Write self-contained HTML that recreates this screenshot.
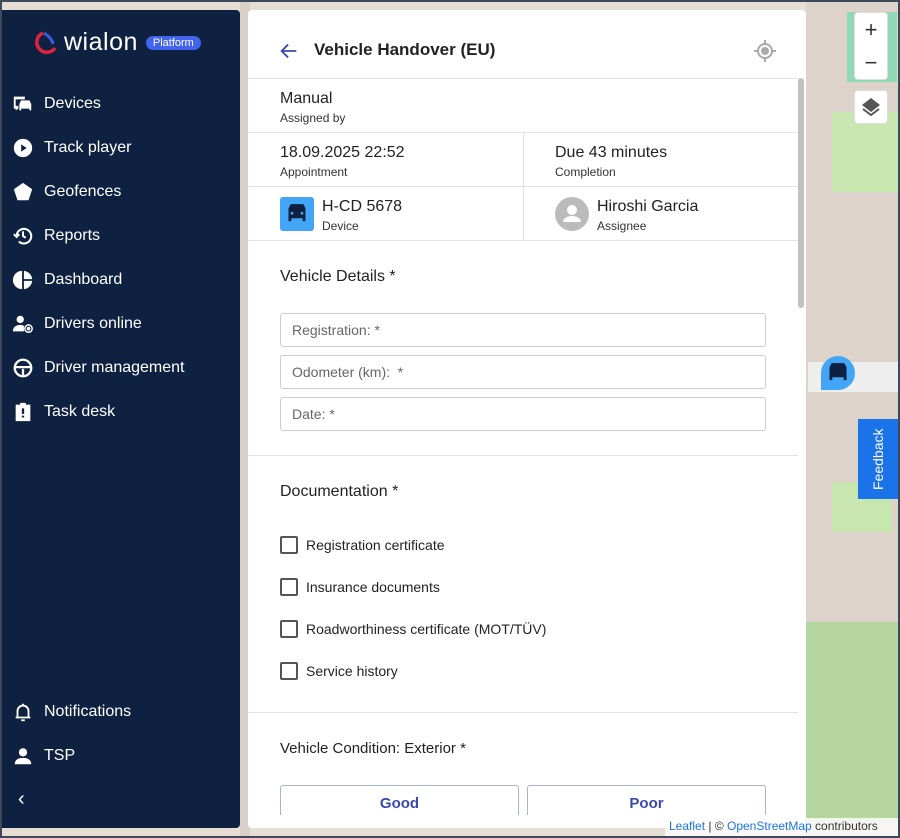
<!DOCTYPE html>
<html><head><meta charset="utf-8"><style>
*{box-sizing:border-box;margin:0;padding:0}
body{width:900px;height:838px;background:#3d4a5c;font-family:"Liberation Sans",sans-serif;overflow:hidden;position:relative}
.map{position:absolute;left:2px;top:2px;width:896px;height:834px;background:#e6ddd4;overflow:hidden}
.side{position:absolute;left:2px;top:10px;width:238px;height:818px;background:#0f2141;border-radius:0 4px 4px 0;color:#fff}
.nav{position:absolute;left:10px;font-size:16px;display:flex;align-items:center}
.nav svg{width:22px;height:22px;margin-right:10px}
.panel{position:absolute;left:248px;top:10px;width:558px;height:818px;background:#fff;border-radius:4px;overflow:hidden;color:#222}
.hr{position:absolute;left:0;width:550px;height:1px;background:#e2e2e2}
.t{position:absolute;font-size:16px;color:#222}
.s{position:absolute;font-size:12px;color:#333}
.inp{position:absolute;left:32px;width:486px;height:34px;border:1px solid #ccc;border-radius:3px;font-size:14px;color:#666;padding:8px 11px}
.cb{position:absolute;left:32px;width:18px;height:18px;border:2px solid #555;border-radius:2px}
.cl{position:absolute;left:58px;font-size:14px;color:#222}
.btn{position:absolute;top:775px;width:239px;height:40px;border:1px solid #a8b0dd;border-radius:3px;color:#3949ab;font-weight:bold;font-size:15px;text-align:center;padding-top:9px}
</style></head><body>
<div class="map">
<div style="position:absolute;left:238px;top:0;width:10px;height:834px;background:#d9d0c8"></div>
<div style="position:absolute;left:804px;top:0;width:94px;height:834px;background:#ddd3ca"></div>
<div style="position:absolute;left:845px;top:10px;width:50px;height:70px;background:#8fd9b4"></div>
<div style="position:absolute;left:830px;top:110px;width:66px;height:80px;background:#c8e6b0"></div>
<div style="position:absolute;left:804px;top:620px;width:94px;height:200px;background:#b5d69e"></div>
<div style="position:absolute;left:830px;top:480px;width:60px;height:50px;background:#c8e6b0"></div>
<div style="position:absolute;left:806px;top:360px;width:92px;height:30px;background:#eee"></div>
</div>
<div class="side">
<div style="position:absolute;left:30px;top:18px;display:flex;align-items:center">
<svg width="26" height="26" viewBox="0 0 26 26"><path d="M11 3 A10 10 0 1 0 23 18" stroke="#e0223c" stroke-width="3.5" fill="none"/><path d="M12 3 Q20 8 21 14" stroke="#3b5bdb" stroke-width="3" fill="none"/></svg>
<span style="font-size:25px;margin-left:6px;letter-spacing:0.5px">wialon</span>
<span style="margin-left:8px;background:#4263eb;border-radius:8px;font-size:11px;padding:1px 7px">Platform</span></div>
<div class="nav" style="top:83px"><svg viewBox="0 0 24 24" fill="#fff"><path d="M2 4h12v3H4v7h3v3l-3 2v-2H2z M8 12l2-4h9l2 4v7h-2v-2H10v2H8z"/></svg>Devices</div>
<div class="nav" style="top:127px"><svg viewBox="0 0 24 24"><circle cx="12" cy="12" r="10" fill="#fff"/><path d="M10 8l6 4-6 4z" fill="#0f2141"/></svg>Track player</div>
<div class="nav" style="top:171px"><svg viewBox="0 0 24 24"><path d="M12 2l10 7-4 12H6L2 9z" fill="#fff"/></svg>Geofences</div>
<div class="nav" style="top:215px"><svg viewBox="0 0 24 24" fill="none" stroke="#fff" stroke-width="2.2"><path d="M5 12a8 8 0 1 1 2.5 6"/><path d="M2 10l3 3 3-3"/><path d="M12 7v5l3 2"/></svg>Reports</div>
<div class="nav" style="top:259px"><svg viewBox="0 0 24 24" fill="#fff"><path d="M11 2v20a10 10 0 0 1 0-20z M13 2a10 10 0 0 1 9 9h-9z M13 13h9a10 10 0 0 1-9 9z"/></svg>Dashboard</div>
<div class="nav" style="top:303px"><svg viewBox="0 0 24 24" fill="#fff"><circle cx="9" cy="7" r="4"/><path d="M1 20c0-5 4-7 8-7 2 0 3 .5 4 1v6z"/><circle cx="18" cy="17" r="4" fill="none" stroke="#fff" stroke-width="1.6"/><circle cx="18" cy="17" r="2"/></svg>Drivers online</div>
<div class="nav" style="top:347px"><svg viewBox="0 0 24 24" fill="none" stroke="#fff" stroke-width="2.5"><circle cx="12" cy="12" r="9"/><path d="M4 11h16M12 13v7" /></svg>Driver management</div>
<div class="nav" style="top:391px"><svg viewBox="0 0 24 24"><path d="M4 4h5V2h6v2h5v18H4z" fill="#fff"/><path d="M12 8v6M12 16v2" stroke="#0f2141" stroke-width="2.5"/></svg>Task desk</div>
<div class="nav" style="top:691px"><svg viewBox="0 0 24 24" fill="none" stroke="#fff" stroke-width="2"><path d="M6 18V11a6 6 0 0 1 12 0v7zM4 18h16M10 21h4M12 3v2"/></svg>Notifications</div>
<div class="nav" style="top:735px"><svg viewBox="0 0 24 24" fill="#fff"><circle cx="12" cy="8" r="4.5"/><path d="M3 21c0-5 4-7 9-7s9 2 9 7z"/></svg>TSP</div>
<div style="position:absolute;left:16px;top:778px;font-size:20px">‹</div>
</div>
<div class="panel">
<svg style="position:absolute;left:30px;top:30px" width="22" height="22" viewBox="0 0 24 24" fill="none" stroke="#3949ab" stroke-width="2"><path d="M20 12H5M11 5l-7 7 7 7"/></svg>
<div style="position:absolute;left:66px;top:30px;font-size:17px;font-weight:bold">Vehicle Handover (EU)</div>
<svg style="position:absolute;left:505px;top:29px" width="24" height="24" viewBox="0 0 24 24" fill="none" stroke="#aaa" stroke-width="2"><circle cx="12" cy="12" r="7"/><circle cx="12" cy="12" r="3" fill="#aaa"/><path d="M12 1v4M12 19v4M1 12h4M19 12h4"/></svg>
<div class="hr" style="top:68px"></div>
<div class="t" style="left:32px;top:80px">Manual</div><div class="s" style="left:32px;top:101px">Assigned by</div>
<div class="hr" style="top:122px"></div>
<div class="t" style="left:32px;top:134px">18.09.2025 22:52</div><div class="s" style="left:32px;top:155px">Appointment</div>
<div class="t" style="left:307px;top:134px">Due 43 minutes</div><div class="s" style="left:307px;top:155px">Completion</div>
<div style="position:absolute;left:275px;top:122px;width:1px;height:108px;background:#e2e2e2"></div>
<div class="hr" style="top:176px"></div>
<div style="position:absolute;left:32px;top:187px;width:34px;height:34px;background:#42a5f5;border-radius:3px"><svg width="34" height="34" viewBox="0 0 24 24"><path d="M6 8l1.5-3h9L18 8v9h-2v-2H8v2H6z" fill="#0f2141"/><circle cx="8.5" cy="11.5" r="1" fill="#42a5f5"/><circle cx="15.5" cy="11.5" r="1" fill="#42a5f5"/></svg></div>
<div class="t" style="left:74px;top:188px">H-CD 5678</div><div class="s" style="left:74px;top:209px">Device</div>
<div style="position:absolute;left:307px;top:187px;width:34px;height:34px;background:#bbb;border-radius:50%"><svg width="34" height="34" viewBox="0 0 34 34" fill="#fff"><circle cx="17" cy="13" r="5"/><path d="M8 25c0-4 5-6 9-6s9 2 9 6z"/></svg></div>
<div class="t" style="left:349px;top:188px">Hiroshi Garcia</div><div class="s" style="left:349px;top:209px">Assignee</div>
<div class="hr" style="top:230px"></div>
<div class="t" style="left:32px;top:258px">Vehicle Details *</div>
<div class="inp" style="top:303px">Registration: *</div>
<div class="inp" style="top:345px">Odometer (km): &nbsp;*</div>
<div class="inp" style="top:387px">Date: *</div>
<div class="hr" style="top:445px"></div>
<div class="t" style="left:32px;top:473px">Documentation *</div>
<div class="cb" style="top:526px"></div><div class="cl" style="top:527px">Registration certificate</div>
<div class="cb" style="top:568px"></div><div class="cl" style="top:569px">Insurance documents</div>
<div class="cb" style="top:610px"></div><div class="cl" style="top:611px">Roadworthiness certificate (MOT/TÜV)</div>
<div class="cb" style="top:652px"></div><div class="cl" style="top:653px">Service history</div>
<div class="hr" style="top:702px"></div>
<div class="t" style="left:32px;top:730px;font-size:15px">Vehicle Condition: Exterior *</div>
<div class="btn" style="left:32px">Good</div>
<div class="btn" style="left:279px">Poor</div>
<div style="position:absolute;left:0;top:805px;width:558px;height:13px;background:#fff"></div>
<div style="position:absolute;left:550px;top:68px;width:6px;height:230px;background:#c1c1c1;border-radius:3px"></div>
</div>
<div style="position:absolute;left:854px;top:12px;width:34px;height:68px;background:#fff;border-radius:4px;font-size:22px;color:#333;text-align:center;line-height:33px;border:1px solid #ddd">+<br>−</div>
<div style="position:absolute;left:854px;top:90px;width:34px;height:34px;background:#fff;border-radius:4px;border:1px solid #ddd"><svg width="32" height="32" viewBox="0 0 32 32" fill="#555"><path d="M16 7l9 7-9 7-9-7z"/><path d="M8 18l8 6 8-6" fill="none" stroke="#555" stroke-width="2"/></svg></div>
<div style="position:absolute;left:821px;top:356px;width:34px;height:34px;background:#42a5f5;border-radius:50% 50% 50% 0"><svg width="34" height="34" viewBox="0 0 24 24"><path d="M6 8l1.5-3h9L18 8v9h-2v-2H8v2H6z" fill="#0f2141"/></svg></div>
<div style="position:absolute;left:858px;top:419px;width:40px;height:80px;background:#1a73e8;color:#fff;font-size:14px;writing-mode:vertical-rl;transform:rotate(180deg);text-align:center;line-height:40px">Feedback</div>
<div style="position:absolute;left:665px;top:818px;width:233px;height:18px;background:rgba(255,255,255,.8);font-size:12px;color:#333;padding:1px 4px"><span style="color:#1a73e8">Leaflet</span> | © <span style="color:#1a73e8">OpenStreetMap</span> contributors</div>
</body></html>
